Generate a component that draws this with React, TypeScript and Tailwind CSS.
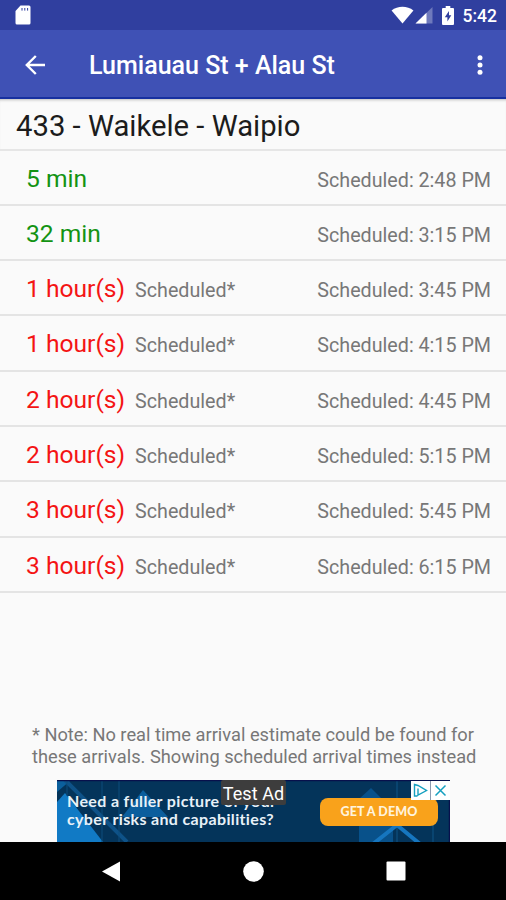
const arrivals = [
  { eta: "5 min", time: "2:48 PM", live: true },
  { eta: "32 min", time: "3:15 PM", live: true },
  { eta: "1 hour(s)", time: "3:45 PM", live: false },
  { eta: "1 hour(s)", time: "4:15 PM", live: false },
  { eta: "2 hour(s)", time: "4:45 PM", live: false },
  { eta: "2 hour(s)", time: "5:15 PM", live: false },
  { eta: "3 hour(s)", time: "5:45 PM", live: false },
  { eta: "3 hour(s)", time: "6:15 PM", live: false },
]

function StatusBar() {
  return (
    <div className="flex h-[30px] shrink-0 items-center justify-between bg-[#303f9f] pl-[15px] pr-[9px] text-white">
      {/* SD card */}
      <svg width="16" height="20" viewBox="0 0 16 20" fill="none">
        <path d="M5.5 0.5H14a1.5 1.5 0 0 1 1.5 1.5v16a1.5 1.5 0 0 1-1.5 1.5H2A1.5 1.5 0 0 1 .5 18V6z" fill="currentColor" />
        <path d="M7 3v2.6M9.8 3v2.6M12.6 3v2.6" stroke="#303f9f" strokeWidth="1" />
      </svg>
      <div className="flex items-center">
        <svg width="23" height="18" viewBox="0 0 24 18" fill="currentColor">
          <path d="M.6 4.2C7-1 17-1 23.4 4.2L12 17.8z" />
        </svg>
        <svg className="ml-px" width="18" height="17" viewBox="0 0 18 17" fill="currentColor">
          <path d="M17.5 0v16.5H.5z" fillOpacity=".3" />
          <path d="M11.5 5.8v10.7H.5z" />
        </svg>
        <svg className="ml-[9px]" width="12" height="19" viewBox="0 0 12 19">
          <path d="M3.7 0h4.6v2H11a1 1 0 0 1 1 1v15a1 1 0 0 1-1 1H1a1 1 0 0 1-1-1V3a1 1 0 0 1 1-1h2.7z" fill="currentColor" />
          <path d="M7 5 2.8 11.3h2.6v4.2l3.9-6.2H7z" fill="#303f9f" />
        </svg>
        <span className="ml-[9px] pt-[2px] text-[17.5px] font-medium leading-[30px]">5:42</span>
      </div>
    </div>
  )
}

function Toolbar() {
  return (
    <header className="flex h-[69px] shrink-0 items-center border-b-2 border-[#1730a0] bg-[#3f51b5] pl-[25px] pr-[22px] pt-[2px] text-white">
      <button aria-label="Back">
        <svg width="20" height="20" viewBox="0 0 20 20" fill="none" stroke="currentColor" strokeWidth="2.4">
          <path d="M20 10H2M10.8 1 1.8 10l9 9" />
        </svg>
      </button>
      <h1 className="ml-[44px] flex-1 whitespace-nowrap pt-[3px] text-[25px] font-medium">Lumiauau St + Alau St</h1>
      <button aria-label="More options">
        <svg width="8" height="20" viewBox="0 0 8 20" fill="currentColor">
          <circle cx="4" cy="2.7" r="2.5" />
          <circle cx="4" cy="10" r="2.5" />
          <circle cx="4" cy="17.3" r="2.5" />
        </svg>
      </button>
    </header>
  )
}

function AdBanner() {
  return (
    <div className="relative ml-[57px] h-[62px] w-[393px] overflow-hidden bg-[#04345a]">
      <svg className="absolute inset-0" width="393" height="62" viewBox="0 0 393 62" fill="none">
        <path d="M0 0h14L0 12z" fill="#0b5f9c" />
        <path d="M0 22 8 13 46 62H0z" fill="#117ac5" />
        <path d="M8 0 70 62" stroke="#0e5288" strokeWidth="4" />
        <path d="M10 0v16M45 0v62M62 0v62" stroke="#0d4d7d" />
        <path d="M86 10 111 37H65z" fill="#0b5e9d" />
        <path d="M302 19 314 8l22 22v32h-34z" fill="#08518a" />
        <path d="M340 0v62M376 26v36" stroke="#0f5486" />
        <path d="M316 64 340 45l23 19" stroke="#1676bf" strokeWidth="4" />
        <path d="M0 .5h393M392.5 0v62" stroke="#07104c" strokeWidth="1.5" />
      </svg>
      <p className="absolute left-[10px] top-[12px] whitespace-nowrap font-['Lato'] text-[16px] font-bold leading-[17.5px] tracking-[0.35px] text-[#e8f1f8]">
        Need a fuller picture of your
        <br />
        cyber risks and capabilities?
      </p>
      <button className="absolute left-[263px] top-[18px] h-[28px] w-[118px] rounded-[8px] bg-[#f9a21b] font-['Lato'] text-[12.5px] font-black tracking-[0.1px] text-[#fff3dc]">
        GET A DEMO
      </button>
      <span className="absolute left-[164px] top-0 h-[25px] w-[65px] rounded-[2px] bg-[#3d3d3d] text-center text-[18px] leading-[27px] tracking-[0.1px] text-white">
        Test Ad
      </span>
      <div className="absolute left-[354px] top-px flex gap-px bg-[#8c9bb0]">
        <svg width="19" height="19" viewBox="0 0 19 19" fill="none" stroke="#16a0c0" strokeWidth="1.4">
          <path d="M0 0h19v19H0z" fill="#fff" stroke="none" />
          <path d="M6.5 15h-3V3.5l3.500 1 8.500 5L7 14V7.500" />
        </svg>
        <svg width="19" height="19" viewBox="0 0 19 19" fill="none" stroke="#16a0c0" strokeWidth="1.5">
          <path d="M0 0h19v19H0z" fill="#fff" stroke="none" />
          <path d="m4.5 4.5 10 10m0-10-10 10" />
        </svg>
      </div>
    </div>
  )
}

function NavBar() {
  return (
    <nav className="flex h-[58px] shrink-0 items-center justify-between bg-black pl-[102px] pr-[100px] text-white">
      <svg width="18" height="21" viewBox="0 0 18 21" fill="currentColor">
        <path d="M18 .5v20L0 10.5z" />
      </svg>
      <svg width="21" height="21" viewBox="0 0 21 21" fill="currentColor">
        <circle cx="10.5" cy="10.5" r="10.3" />
      </svg>
      <svg width="20" height="20" viewBox="0 0 20 20" fill="currentColor">
        <rect x=".5" y=".5" width="19" height="19" rx="1" />
      </svg>
    </nav>
  )
}

export default function App() {
  return (
    <div className="flex h-[900px] w-[506px] flex-col overflow-hidden bg-[#fafafa] font-['Roboto',sans-serif]">
      <StatusBar />
      <Toolbar />

      <h2 className="h-[51.5px] shrink-0 border-b-2 border-[#e6e6e6] pl-[16px] text-[29.25px] leading-[54px] text-[#1c1c1c] shadow-[inset_0_3px_3px_-2px_#bbb]">
        433 - Waikele - Waipio
      </h2>

      <ul>
        {arrivals.map((arrival, i) => (
          <li
            key={i}
            className="flex h-[55.3px] items-baseline border-b-2 border-[#e4e4e4] pl-[26px] pr-[15px] text-[19.7px] leading-[56.5px] text-[#777777]"
          >
            <span className={`text-[24.6px] ${arrival.live ? "text-[#139313]" : "text-[#f41414]"}`}>{arrival.eta}</span>
            {!arrival.live && <span className="ml-[10px]">Scheduled*</span>}
            <span className="ml-auto">Scheduled: {arrival.time}</span>
          </li>
        ))}
      </ul>

      <div className="mt-auto">
        <p className="mb-[13px] whitespace-nowrap pl-[32px] text-[18.25px] leading-[21.5px] text-[#777777]">
          * Note: No real time arrival estimate could be found for
          <br />
          these arrivals. Showing scheduled arrival times instead
        </p>
        <AdBanner />
      </div>
      <NavBar />
    </div>
  )
}
